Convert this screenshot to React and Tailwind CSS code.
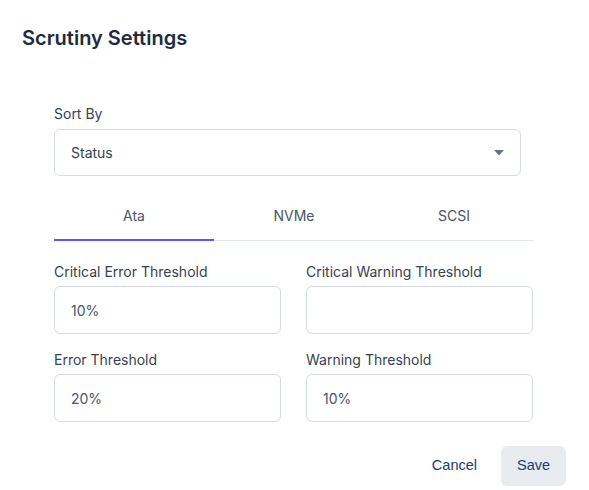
import React, { useState } from "react";

function Field({ label, value }) {
  return (
    <div className="flex flex-col">
      <label className="text-[14px] leading-[20px] text-[#374151] mb-[4px]">{label}</label>
      <div className="h-[48px] border border-[#d5dbe5] rounded-[6px] flex items-center pl-[16px] text-[14px] text-[#475569]">
        {value}
      </div>
    </div>
  );
}

export default function App() {
  const [tab, setTab] = useState(0);
  const tabs = ["Ata", "NVMe", "SCSI"];
  return (
    <div className="w-[589px] h-[490px] bg-white" style={{ fontFamily: "Inter, 'Noto Sans', sans-serif" }}>
      <div className="pt-[24px] pl-[22px]">
        <h1 className="text-[20px] leading-[28px] font-semibold text-[#1e2b3f]">Scrutiny Settings</h1>
      </div>
      <div className="pl-[54px] mt-[52px] w-[534px]">
        <label className="block text-[14px] leading-[20px] text-[#374151] mb-[5px]">Sort By</label>
        <div className="w-[467px] h-[47px] border border-[#d5dbe5] rounded-[6px] flex items-center justify-between pl-[16px] pr-[16px] text-[14px] text-[#334155]">
          <span>Status</span>
          <svg width="10" height="6" viewBox="0 0 10 6">
            <path d="M0 0 H10 L5 5.5 Z" fill="#64748b" />
          </svg>
        </div>
        <div className="mt-[17px] w-[480px] flex border-b border-[#e2e8f0]">
          {tabs.map((t, i) => (
            <button
              key={t}
              onClick={() => setTab(i)}
              className={
                "flex-1 h-[48px] flex items-center justify-center text-[14px] text-[#4b5563] border-b-2 -mb-px " +
                (tab === i ? "border-[#5b5bf0]" : "border-transparent")
              }
            >
              <span className="-mt-[1px]">{t}</span>
            </button>
          ))}
        </div>
        <div className="mt-[21px] grid grid-cols-[227px_227px] gap-x-[25px] gap-y-[16px]">
          <Field label="Critical Error Threshold" value="10%" />
          <Field label="Critical Warning Threshold" value="" />
          <Field label="Error Threshold" value="20%" />
          <Field label="Warning Threshold" value="10%" />
        </div>
      </div>
      <div className="mt-[24px] flex justify-end pr-[23px] gap-[8px]" style={{ fontFamily: "'Liberation Sans', Arial, sans-serif" }}>
        <button className="h-[40px] px-[16px] text-[14.5px] text-[#1e3a6e] rounded-[6px]">Cancel</button>
        <button className="h-[40px] w-[65px] text-[14.5px] text-[#1e3a6e] bg-[#e8ebf0] rounded-[6px]">Save</button>
      </div>
    </div>
  );
}
